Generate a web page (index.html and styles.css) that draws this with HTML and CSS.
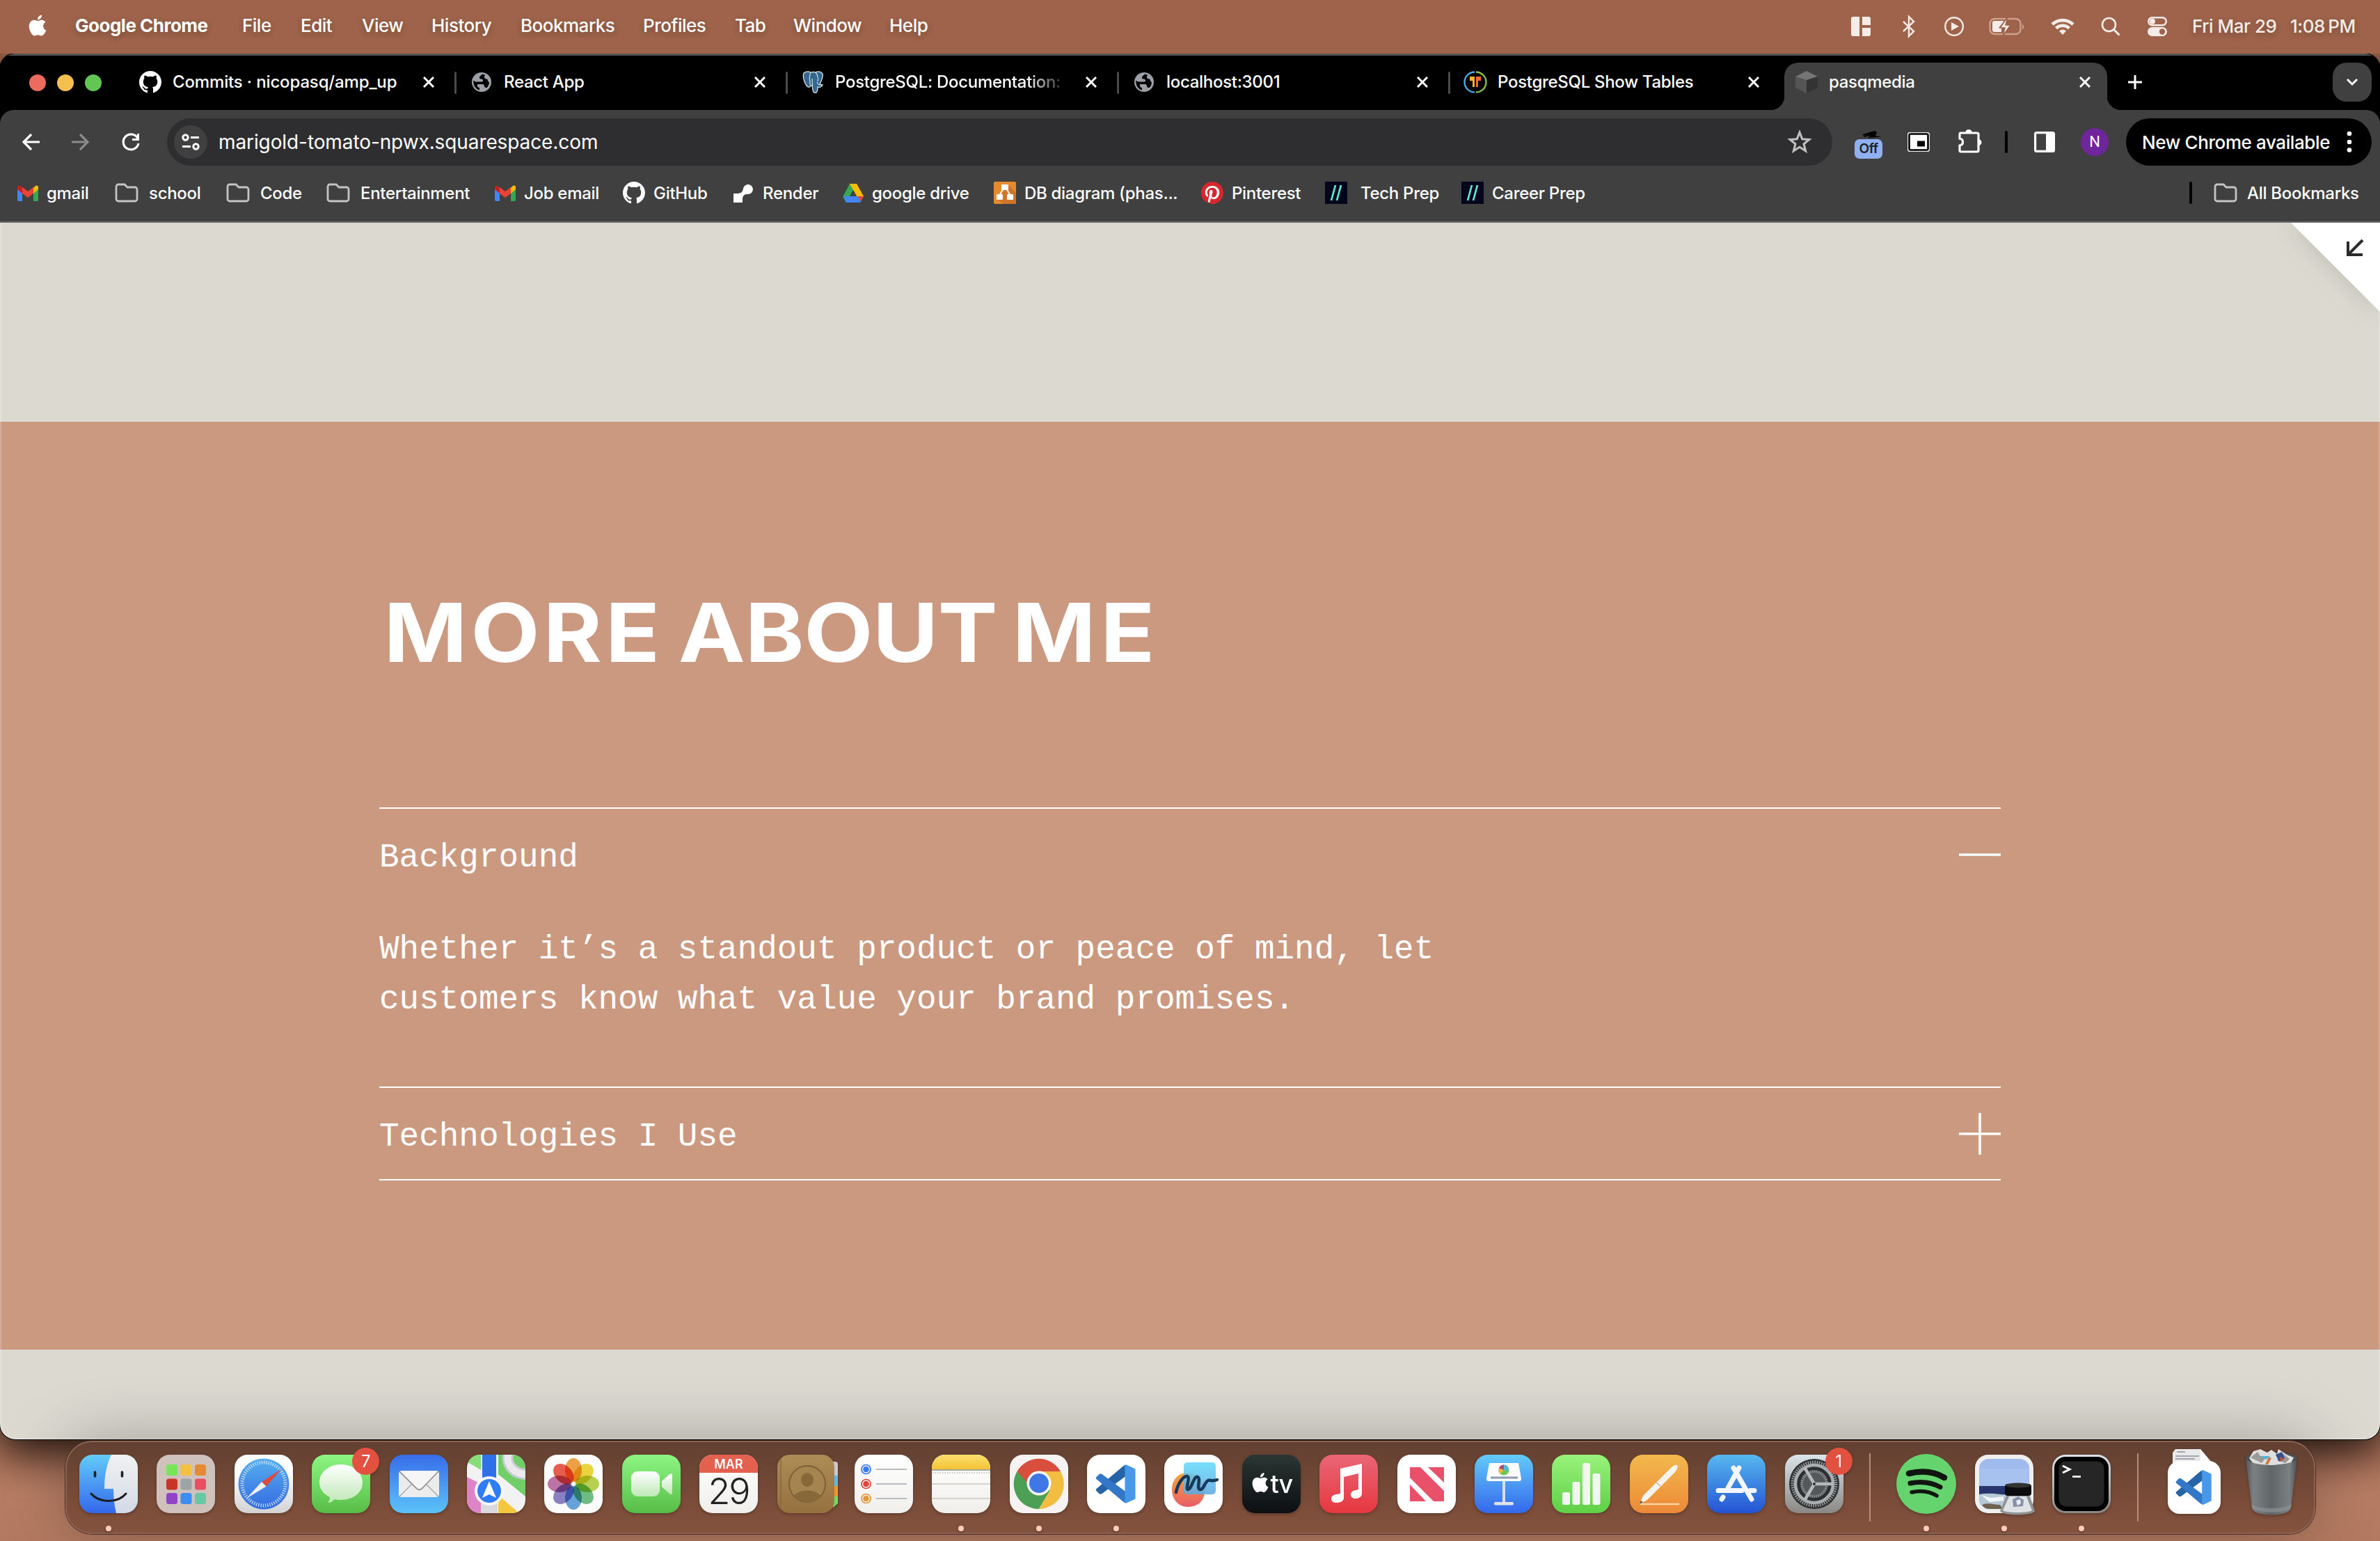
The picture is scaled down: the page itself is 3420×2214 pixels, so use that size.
FILE: index.html
```
<!DOCTYPE html>
<html lang="en">
<head>
<meta charset="utf-8">
<title>pasqmedia</title>
<link rel="stylesheet" href="styles.css">
</head>
<body>
<svg class="defs" aria-hidden="true">
  <defs>
    <symbol id="apple" viewBox="0 0 24 24"><path fill="currentColor" d="M12.152 6.896c-.948 0-2.415-1.078-3.96-1.04-2.04.027-3.91 1.183-4.961 3.014-2.117 3.675-.546 9.103 1.519 12.09 1.013 1.454 2.208 3.09 3.792 3.039 1.52-.065 2.09-.987 3.935-.987 1.831 0 2.35.987 3.96.948 1.637-.026 2.676-1.48 3.676-2.948 1.156-1.688 1.636-3.325 1.662-3.415-.039-.013-3.182-1.221-3.22-4.857-.026-3.04 2.48-4.494 2.597-4.559-1.429-2.09-3.623-2.324-4.39-2.376-2-.156-3.675 1.09-4.61 1.09zM15.53 3.83c.843-1.012 1.4-2.427 1.245-3.83-1.207.052-2.662.805-3.532 1.818-.78.896-1.454 2.338-1.273 3.714 1.338.104 2.715-.688 3.559-1.701"/></symbol>
    <symbol id="github" viewBox="0 0 16 16"><path fill="#fff" d="M8 0C3.58 0 0 3.58 0 8c0 3.54 2.29 6.53 5.47 7.59.4.07.55-.17.55-.38 0-.19-.01-.82-.01-1.49-2.01.37-2.53-.49-2.69-.94-.09-.23-.48-.94-.82-1.13-.28-.15-.68-.52-.01-.53.63-.01 1.08.58 1.23.82.72 1.21 1.87.87 2.33.66.07-.52.28-.87.51-1.07-1.78-.2-3.64-.89-3.64-3.95 0-.87.31-1.59.82-2.15-.08-.2-.36-1.02.08-2.12 0 0 .67-.21 2.2.82.64-.18 1.32-.27 2-.27s1.36.09 2 .27c1.53-1.04 2.2-.82 2.2-.82.44 1.1.16 1.92.08 2.12.51.56.82 1.27.82 2.15 0 3.07-1.87 3.75-3.65 3.95.29.25.54.73.54 1.48 0 1.07-.01 1.93-.01 2.2 0 .21.15.46.55.38A8.01 8.01 0 0 0 16 8c0-4.42-3.58-8-8-8z"/></symbol>
    <symbol id="globe" viewBox="0 0 32 32"><circle cx="16" cy="16" r="14" fill="#9aa0a6"/><path fill="#000" d="M17 4.500c-1 2-4 2.500-4 5 0 2 1.500 2 3 2s2 1 2 2.500-1 1.500-2.500 1.500H8.500c-2 0-3.500-1-4-2.500C3.500 20 7 26 13 27.500V24c-2 0-3-1-3-3v-2h7.500c2 0 2.500 1.500 2.500 3s1.500 2 3.500 2c2-2 3.500-4.500 3.500-8-1 0-2-1-2-2.500S23 11 21.500 11 20 9 20 8l1-2.500z"/></symbol>
    <symbol id="close" viewBox="0 0 16 16"><path d="M1 1l14 14M15 1L1 15" stroke="#fff" stroke-width="3" fill="none"/></symbol>
    <symbol id="folder" viewBox="0 0 34 28"><path d="M2 5a3 3 0 0 1 3-3h9l4 4h11a3 3 0 0 1 3 3v14a3 3 0 0 1-3 3H5a3 3 0 0 1-3-3z" fill="none" stroke="#c4c4c4" stroke-width="2.800"/></symbol>
    <symbol id="gmail" viewBox="0 0 30 23"><path fill="#4285f4" d="M0 3h7v20H2a2 2 0 0 1-2-2z"/><path fill="#34a853" d="M23 3h7v18a2 2 0 0 1-2 2h-5z"/><path fill="#fbbc04" d="M23 4l3-3c2-1.500 4 0 4 2v3l-7 6z"/><path fill="#c5221f" d="M0 3c0-2 2-3.500 4-2l3 3v8L0 6z"/><path fill="#ea4335" d="M7 3l8 6 8-6v9l-8 6-8-6z"/></symbol>
    <symbol id="vscode" viewBox="0 0 60 60"><path fill="#2664a8" d="M44 3v16L10 44c-2 1-3 1-4 0l-4-4c-1-1-1-2 0-3L41 4z"/><path fill="#3277c8" d="M44 57V41L10 16c-2-1-3-1-4 0l-4 4c-1 1-1 2 0 3l39 33z"/><path fill="#4798e8" d="M44 2l13 6c1 1 1 1.500 1 2v40c0 1 0 1.500-1 2l-13 6c-1-1-1-1-1-2V4c0-1 0-1 1-2z"/></symbol>
    <linearGradient id="gFinder" x1="0" y1="0" x2="0" y2="1"><stop offset="0" stop-color="#63cbf9"/><stop offset="1" stop-color="#3468ec"/></linearGradient>
    <linearGradient id="gFace" x1="0" y1="0" x2="0" y2="1"><stop offset="0" stop-color="#f1f1f2"/><stop offset="1" stop-color="#d3dae6"/></linearGradient>
    <linearGradient id="gWhite" x1="0" y1="0" x2="0" y2="1"><stop offset=".3" stop-color="#fff"/><stop offset="1" stop-color="#d3d3d3"/></linearGradient>
    <linearGradient id="gPaper" x1="0" y1="0" x2="0" y2="1"><stop offset="0" stop-color="#fff"/><stop offset="1" stop-color="#f0efec"/></linearGradient>
    <linearGradient id="gGreen" x1="0" y1="0" x2="0" y2="1"><stop offset="0" stop-color="#8df682"/><stop offset="1" stop-color="#57bd47"/></linearGradient>
    <linearGradient id="gBlue" x1="0" y1="0" x2="0" y2="1"><stop offset="0" stop-color="#386cea"/><stop offset="1" stop-color="#5bc3f9"/></linearGradient>
    <linearGradient id="gBubble" x1="0" y1="0" x2="0" y2="1"><stop offset="0" stop-color="#fff"/><stop offset="1" stop-color="#bfe8b5"/></linearGradient>
    <linearGradient id="gSafari" x1="0" y1="0" x2="0" y2="1"><stop offset="0" stop-color="#55aef0"/><stop offset="1" stop-color="#356ce0"/></linearGradient>
    <linearGradient id="gRed" x1="0" y1="0" x2="0" y2="1"><stop offset="0" stop-color="#ea6677"/><stop offset="1" stop-color="#e6373f"/></linearGradient>
    <linearGradient id="gOrange" x1="0" y1="0" x2="0" y2="1"><stop offset="0" stop-color="#f3b94d"/><stop offset="1" stop-color="#ec8937"/></linearGradient>
    <linearGradient id="gStore" x1="0" y1="0" x2="0" y2="1"><stop offset="0" stop-color="#56b8ef"/><stop offset="1" stop-color="#2453d4"/></linearGradient>
    <linearGradient id="gNumbers" x1="0" y1="0" x2="0" y2="1"><stop offset="0" stop-color="#99f37b"/><stop offset="1" stop-color="#5ed046"/></linearGradient>
    <linearGradient id="gDark" x1="0" y1="0" x2="0" y2="1"><stop offset="0" stop-color="#2b3633"/><stop offset="1" stop-color="#0c0f12"/></linearGradient>
    <linearGradient id="gGold" x1="0" y1="0" x2="0" y2="1"><stop offset="0" stop-color="#ad8c55"/><stop offset="1" stop-color="#957140"/></linearGradient>
    <linearGradient id="gGear" x1="0" y1="0" x2="0" y2="1"><stop offset="0" stop-color="#dbe4ea"/><stop offset="1" stop-color="#8b8884"/></linearGradient>
    <linearGradient id="gYellow" x1="0" y1="0" x2="0" y2="1"><stop offset="0" stop-color="#fbdf6f"/><stop offset="1" stop-color="#f4c236"/></linearGradient>
    <linearGradient id="gBin" x1="0" y1="0" x2="1" y2="0"><stop offset="0" stop-color="#52575a"/><stop offset=".15" stop-color="#7b8083"/><stop offset=".5" stop-color="#606568"/><stop offset=".85" stop-color="#7b8083"/><stop offset="1" stop-color="#4a4e51"/></linearGradient>
    <linearGradient id="gSquare" x1="0" y1="0" x2="0" y2="1"><stop offset="0" stop-color="#66dbfb"/><stop offset="1" stop-color="#5fa9df"/></linearGradient>
    <linearGradient id="gBlob" x1="0" y1="0" x2="0" y2="1"><stop offset="0" stop-color="#f2a63c"/><stop offset="1" stop-color="#ea5c68"/></linearGradient>
    <clipPath id="tile"><rect width="84" height="84" rx="19"/></clipPath>
  </defs>
</svg>

<div class="desktop">
  <header class="menubar">
    <nav class="menus">
      <svg class="apple-mark"><use href="#apple"/></svg>
      <b>Google Chrome</b><span>File</span><span>Edit</span><span>View</span><span>History</span><span>Bookmarks</span><span>Profiles</span><span>Tab</span><span>Window</span><span>Help</span>
    </nav>
    <div class="status">
      <svg width="28" height="28" viewBox="0 0 28 28"><path fill="currentColor" d="M3 0h9v28H3a3 3 0 0 1-3-3V3a3 3 0 0 1 3-3zM16 0h9a3 3 0 0 1 3 3v9H16zM16 16h12v9a3 3 0 0 1-3 3h-9z"/></svg>
      <svg width="18" height="30" viewBox="0 0 18 30"><path d="M1 8l15 14-7 7V1l7 7L1 22" fill="none" stroke="currentColor" stroke-width="2.400"/></svg>
      <svg width="30" height="30" viewBox="0 0 30 30"><circle cx="15" cy="15" r="12.800" fill="none" stroke="currentColor" stroke-width="2.400"/><path d="M11 9l11 6-11 6z" fill="currentColor"/></svg>
      <svg width="52" height="28" viewBox="0 0 52 28"><rect x="1.500" y="3" width="44" height="22" rx="7" fill="none" stroke="#cda08d" stroke-width="2.400"/><path d="M48 11v7c3-1 3-6 0-7z" fill="#cda08d"/><path d="M8 6h14l-8 10h4v6H8a3 3 0 0 1-3-3V9a3 3 0 0 1 3-3z" fill="currentColor"/><path d="M27 0L16 16h7l-3 12 11-16h-7z" fill="currentColor" stroke="#9e634a" stroke-width="1.500"/></svg>
      <svg width="34" height="26" viewBox="0 0 34 26"><path d="M2 10a22 22 0 0 1 30 0M7.500 15.500a14 14 0 0 1 19 0" fill="none" stroke="currentColor" stroke-width="4.600"/><path d="M17 25l-5-5.500a8 8 0 0 1 10 0z" fill="currentColor"/></svg>
      <svg width="28" height="28" viewBox="0 0 28 28"><circle cx="11.500" cy="11.500" r="9.500" fill="none" stroke="currentColor" stroke-width="2.600"/><path d="M18.500 18.500l8 8" stroke="currentColor" stroke-width="3"/></svg>
      <svg width="28" height="28" viewBox="0 0 28 28"><rect x="1.200" y="1.200" width="25.600" height="11" rx="5.500" fill="none" stroke="currentColor" stroke-width="2.400"/><circle cx="7" cy="6.700" r="4" fill="currentColor"/><rect y="15" width="28" height="13" rx="6.500" fill="currentColor"/><circle cx="21" cy="21.500" r="4.200" fill="#9e634a"/></svg>
      <span>Fri Mar 29</span><span class="time">1:08 PM</span>
    </div>
  </header>

  <main class="window">
    <div class="tabstrip">
      <div class="lights"><i class="red"></i><i class="amber"></i><i class="green"></i></div>
      <div class="tab first"><svg class="fav"><use href="#github"/></svg><span>Commits · nicopasq/amp_up</span><svg class="x"><use href="#close"/></svg></div>
      <div class="tab"><svg class="fav"><use href="#globe"/></svg><span>React App</span><svg class="x"><use href="#close"/></svg></div>
      <div class="tab"><svg class="fav" viewBox="0 0 32 32"><path fill="#336791" stroke="#dfe6ea" stroke-width="1.300" d="M3 3c4-3 8-2 10-1 3-1 5-1 7 0 4-2 8-1 10 2 1 5-2 11-4 15 1 1 3 1 4 1-1 3-4 4-7 3 0 3 0 6-2 8-3 1-5-1-5-4l-1-7c-2 3-5 4-7 2C4 18 1 8 3 3z"/><path d="M13 2c-2 4-2 9-1 14 0 2-1 3 1 5M20 2c3 4 4 9 3 13M16 20c-2-3 0-5-1-9M22 16c1 2 3 4 4 4" fill="none" stroke="#b9d6cf" stroke-width="1.300"/></svg><span class="fade">PostgreSQL: Documentation:</span><svg class="x"><use href="#close"/></svg></div>
      <div class="tab"><svg class="fav"><use href="#globe"/></svg><span>localhost:3001</span><svg class="x"><use href="#close"/></svg></div>
      <div class="tab last"><svg class="fav" viewBox="0 0 32 32"><path d="M15 1.500a14.500 14.500 0 0 0 0 29" fill="none" stroke="#4aa8e8" stroke-width="2.400"/><path d="M17 1.500a14.500 14.500 0 0 1 0 29" fill="none" stroke="#8bc34a" stroke-width="2.400"/><path fill="#f5b32e" d="M8 8h7v15h-3v-9H8z"/><path fill="#ef6c2e" d="M17 8h7v6h-4v9h-3z"/></svg><span>PostgreSQL Show Tables</span><svg class="x"><use href="#close"/></svg></div>
      <div class="tab active"><svg class="fav" viewBox="0 0 32 32"><path fill="#757575" d="M16 0l16 8-16 6L0 8z"/><path fill="#555" d="M0 8l16 5v19L0 24z"/><path fill="#333" d="M32 8l-16 5v19l16-8z"/></svg><span>pasqmedia</span><svg class="x"><use href="#close"/></svg></div>
      <svg class="newtab" viewBox="0 0 22 22"><path d="M11 1v20M1 11h20" stroke="#fff" stroke-width="3"/></svg>
      <div class="tabsearch"><svg width="18" height="12" viewBox="0 0 18 12"><path d="M2 2l7 7 7-7" fill="none" stroke="#fff" stroke-width="3"/></svg></div>
    </div>

    <div class="toolbar">
      <svg class="nav" viewBox="0 0 32 32"><path d="M29 16H7M17 5L6 16l11 11" fill="none" stroke="#fff" stroke-width="3.200"/></svg>
      <svg class="nav" viewBox="0 0 32 32"><path d="M3 16h22M15 5l11 11-11 11" fill="none" stroke="#8b8b8b" stroke-width="3.200"/></svg>
      <svg class="nav" viewBox="0 0 32 32"><path d="M26.500 12A11 11 0 1 0 27 18" fill="none" stroke="#fff" stroke-width="3.200"/><path d="M28 4v10H18v-3h7V4z" fill="#fff"/></svg>
      <div class="omnibox">
        <div class="site"><svg width="26" height="24" viewBox="0 0 26 24"><g fill="none" stroke="#fff" stroke-width="3"><circle cx="5.500" cy="5.500" r="3.700"/><path d="M13 5.500h12M1 18.500h12"/><circle cx="20.500" cy="18.500" r="3.700"/></g></svg></div>
        <span class="url">marigold-tomato-npwx.squarespace.com</span>
        <svg class="star" viewBox="0 0 32 32"><path d="M16 3l3.600 9 9.400.7-7.300 6 2.400 9.300-8.100-5.200L7.900 28l2.400-9.300-7.300-6 9.400-.7z" fill="none" stroke="#c0c0c0" stroke-width="2.900"/></svg>
      </div>
      <div class="ext"><svg width="28" height="10" viewBox="0 0 28 10"><path d="M2 5l13-4 5-1 2 3-2 3 3 3-14 1 4-3-10 2 1-2 9-3-11 3zM22 8h5v1h-5z" fill="#000"/></svg><span>Off</span></div>
      <svg class="pip" viewBox="0 0 32 28"><rect width="32" height="28" rx="3" fill="#ececec"/><rect x="2.500" y="2.500" width="27" height="23" rx="2" fill="#fff" stroke="#000" stroke-width="2.600"/><rect x="14" y="12.500" width="11" height="8" fill="#000"/></svg>
      <svg class="puzzle" viewBox="0 0 34 34"><path d="M3 5h24a2 2 0 0 1 2 2v23a2 2 0 0 1-2 2H4a2 2 0 0 1-2-2v-7c6-1 6-9 0-10V7a2 2 0 0 1 1-2z" fill="none" stroke="#fff" stroke-width="3.200"/><path d="M10 5a5 5 0 0 1 10 0zM29 14a4.500 4.500 0 0 1 0 9z" fill="#fff"/></svg>
      <i class="bar"></i>
      <svg class="side" viewBox="0 0 30 30"><rect x="1.600" y="1.600" width="26.800" height="26.800" rx="2" fill="none" stroke="#fff" stroke-width="3.200"/><path d="M17 1h12v28H17z" fill="#fff"/></svg>
      <div class="avatar">N</div>
      <div class="update"><span>New Chrome available</span><svg width="8" height="32" viewBox="0 0 8 32"><g fill="#fff"><circle cx="4" cy="4" r="3.300"/><circle cx="4" cy="16" r="3.300"/><circle cx="4" cy="27.500" r="3.300"/></g></svg></div>
    </div>

    <div class="bookmarks">
      <div class="bm gm"><i><svg width="30" height="23"><use href="#gmail"/></svg></i>gmail</div>
      <div class="bm folder"><i><svg width="34" height="28"><use href="#folder"/></svg></i>school</div>
      <div class="bm folder"><i><svg width="34" height="28"><use href="#folder"/></svg></i>Code</div>
      <div class="bm folder"><i><svg width="34" height="28"><use href="#folder"/></svg></i>Entertainment</div>
      <div class="bm gm"><i><svg width="30" height="23"><use href="#gmail"/></svg></i>Job email</div>
      <div class="bm"><i><svg width="32" height="32"><use href="#github"/></svg></i>GitHub</div>
      <div class="bm gm"><i><svg width="28" height="28" viewBox="0 0 28 28"><path fill="#fff" d="M0 15h13v13H0zM5 15c6 0 8-2 9-7a7 7 0 1 1 7 8c-5 0-7 1-8 6z"/></svg></i>Render</div>
      <div class="bm gm"><i><svg width="30" height="27" viewBox="0 0 30 27"><path fill="#34a853" d="M10 0h6l3 5L5 27 0 19z"/><path fill="#fbbc04" d="M10 0h10l10 18H20z"/><path fill="#4285f4" d="M1 18h29l-5 9H5z"/><path fill="#ea4335" d="M21 18h9l-4 7z"/><path fill="#404040" d="M15 9l5 9H10z"/></svg></i>google drive</div>
      <div class="bm"><i><svg width="32" height="32" viewBox="0 0 32 32"><rect width="32" height="32" rx="2" fill="#e58a2f"/><path fill="#cf7428" d="M20 4l12 12v16H14L6 26z"/><path d="M15 8L8 20M17 8l7 12" stroke="#fff" stroke-width="2"/><rect x="11" y="4" width="10" height="8" rx="1" fill="#fff"/><rect x="4" y="18" width="9" height="8" rx="1" fill="#fff"/><rect x="19" y="18" width="9" height="8" rx="1" fill="#fff"/></svg></i>DB diagram (phas...</div>
      <div class="bm"><i><svg width="32" height="32" viewBox="0 0 24 24"><circle cx="12" cy="12" r="11" fill="#fff"/><path fill="#d8262f" d="M12.017 0C5.396 0 .029 5.367.029 11.987c0 5.079 3.158 9.417 7.618 11.162-.105-.949-.199-2.403.041-3.439.219-.937 1.406-5.957 1.406-5.957s-.359-.72-.359-1.781c0-1.663.967-2.911 2.168-2.911 1.024 0 1.518.769 1.518 1.688 0 1.029-.653 2.567-.992 3.992-.285 1.193.6 2.165 1.775 2.165 2.128 0 3.768-2.245 3.768-5.487 0-2.861-2.063-4.869-5.008-4.869-3.41 0-5.409 2.562-5.409 5.199 0 1.033.394 2.143.889 2.741.099.12.112.225.085.345-.09.375-.293 1.199-.334 1.363-.053.225-.172.271-.401.165-1.495-.69-2.433-2.878-2.433-4.646 0-3.776 2.748-7.252 7.92-7.252 4.158 0 7.392 2.967 7.392 6.923 0 4.135-2.607 7.462-6.233 7.462-1.214 0-2.354-.629-2.758-1.379l-.749 2.848c-.269 1.045-1.004 2.352-1.498 3.146 1.123.345 2.306.535 3.55.535 6.607 0 11.985-5.365 11.985-11.987C23.97 5.39 18.592.026 11.985.026z"/></svg></i>Pinterest</div>
      <div class="bm wide"><i><svg width="32" height="32" viewBox="0 0 32 32"><rect width="32" height="32" fill="#03061a"/><path d="M9 27l6-22M17 27l6-22" stroke="#5fe3d0" stroke-width="2.800"/></svg></i>Tech Prep</div>
      <div class="bm"><i><svg width="32" height="32" viewBox="0 0 32 32"><rect width="32" height="32" fill="#03061a"/><path d="M9 27l6-22M17 27l6-22" stroke="#5fe3d0" stroke-width="2.800"/></svg></i>Career Prep</div>
      <div class="bm all folder"><b></b><i><svg width="34" height="28"><use href="#folder"/></svg></i>All Bookmarks</div>
    </div>

    <div class="page">
      <section class="top">
        <div class="corner"><svg viewBox="0 0 128 128"><path d="M0 0h128v128z" fill="#fff"/><path d="M103 25L83 45M82 27v19h21" fill="none" stroke="#2b2b2b" stroke-width="4"/></svg></div>
      </section>
      <section class="about">
        <h1><span class="more">MORE</span> <span class="abt">ABOUT</span> <span class="me">ME</span></h1>
        <div class="accordion">
          <div class="row"><span>Background</span><svg width="60" height="60" viewBox="0 0 60 60"><path d="M0 30h60" stroke="#fff" stroke-width="3.600"/></svg></div>
          <p>Whether it’s a standout product or peace of mind, let customers know what value your brand promises.</p>
          <div class="row second"><span>Technologies I Use</span><svg width="60" height="60" viewBox="0 0 60 60"><path d="M0 30h60M30 0v60" stroke="#fff" stroke-width="3.600"/></svg></div>
        </div>
      </section>
    </div>
  </main>

  <footer class="dock">
    <div class="app on"><svg viewBox="0 0 84 84"><g clip-path="url(#tile)"><rect width="84" height="84" fill="url(#gFinder)"/><path d="M46 0h38v84H53c-3-12-4-24-4-35H36C36 28 40 12 46 0z" fill="url(#gFace)"/></g><path d="M22.500 25v6M61.500 25v6" stroke="#222" stroke-width="3.600" stroke-linecap="round"/><path d="M17 56c12 14 38 14 50 0" fill="none" stroke="#1b1b1f" stroke-width="3" stroke-linecap="round"/></svg></div>
    <div class="app"><svg viewBox="0 0 84 84"><rect width="84" height="84" rx="19" fill="#cfc2bd"/><rect x="14" y="14" width="16" height="16" rx="3.500" fill="#79e35a"/><rect x="34.500" y="14" width="16" height="16" rx="3.500" fill="#f3c043"/><rect x="55" y="14" width="16" height="16" rx="3.500" fill="#e58a33"/><rect x="14" y="34.500" width="16" height="16" rx="3.500" fill="#c93527"/><rect x="34.500" y="34.500" width="16" height="16" rx="3.500" fill="#9ca4a8"/><rect x="55" y="34.500" width="16" height="16" rx="3.500" fill="#e94e63"/><rect x="14" y="55" width="16" height="16" rx="3.500" fill="#9144c8"/><rect x="34.500" y="55" width="16" height="16" rx="3.500" fill="#3d8df0"/><rect x="55" y="55" width="16" height="16" rx="3.500" fill="#66c9a6"/></svg></div>
    <div class="app"><svg viewBox="0 0 84 84"><rect width="84" height="84" rx="19" fill="url(#gWhite)"/><circle cx="42" cy="42" r="36.500" fill="url(#gSafari)"/><circle cx="42" cy="42" r="31" fill="none" stroke="#cfe4fa" stroke-width="5" stroke-dasharray="1.200 2.047"/><path d="M67 21L45.500 45.500 39 39z" fill="#df4a3c"/><path d="M17 63l22-24 6.500 6.500z" fill="#eee"/></svg></div>
    <div class="app"><svg viewBox="0 0 84 84"><rect width="84" height="84" rx="19" fill="url(#gGreen)"/><path d="M42 14c17 0 31 11 31 26S59 65 42 65c-3 0-6 0-9-1-3 3-6 5-10 5 2-2 3-5 3-8-9-4-15-12-15-21 0-15 14-26 31-26z" fill="url(#gBubble)"/></svg><em>7</em></div>
    <div class="app"><svg viewBox="0 0 84 84"><rect width="84" height="84" rx="19" fill="url(#gBlue)"/><rect x="13" y="23" width="58" height="38" rx="4" fill="#ececec"/><path d="M14 60l20-20M70 60L50 40" stroke="#aaa" stroke-width="1.500"/><path d="M14 24l24 24c3 3 6 3 9 0l23-24" fill="#f6f6f6" stroke="#9a9a9a" stroke-width="1.800"/></svg></div>
    <div class="app"><svg viewBox="0 0 84 84"><g clip-path="url(#tile)"><rect width="84" height="84" fill="#f2f1f4"/><path d="M0 0h20v22L0 10z" fill="#86de78"/><path d="M45 0h39v60L45 28z" fill="#70cf66"/><path d="M0 32l20 10v42H0z" fill="#dd83c8"/><path d="M45 58l30 26H45z" fill="#f3c83f"/><path d="M60-4c-6 18 8 34 30 32" stroke="#c9c9d2" stroke-width="16" fill="none"/><path d="M60-4c-6 18 8 34 30 32" stroke="#e9e9ee" stroke-width="10" fill="none"/><rect x="22" width="20" height="34" fill="#2f6fe8"/><path d="M20 70h24v14H20z" fill="#d9d9de"/></g><circle cx="32" cy="52" r="21" fill="#f6f6f8"/><circle cx="32" cy="52" r="17" fill="#2f7df5"/><path d="M32 38l10 24-10-5-10 5z" fill="#fff"/></svg></div>
    <div class="app"><svg viewBox="0 0 84 84"><rect width="84" height="84" rx="19" fill="#fcfcfc"/><g class="petals"><ellipse cx="42" cy="22" rx="12" ry="17" fill="#f09a37"/><ellipse cx="42" cy="22" rx="12" ry="17" fill="#ecd32f" transform="rotate(45 42 42)"/><ellipse cx="42" cy="22" rx="12" ry="17" fill="#b3cf43" transform="rotate(90 42 42)"/><ellipse cx="42" cy="22" rx="12" ry="17" fill="#64b97a" transform="rotate(135 42 42)"/><ellipse cx="42" cy="22" rx="12" ry="17" fill="#5a9cd8" transform="rotate(180 42 42)"/><ellipse cx="42" cy="22" rx="12" ry="17" fill="#8277c0" transform="rotate(225 42 42)"/><ellipse cx="42" cy="22" rx="12" ry="17" fill="#b8699f" transform="rotate(270 42 42)"/><ellipse cx="42" cy="22" rx="12" ry="17" fill="#e9503f" transform="rotate(315 42 42)"/></g></svg></div>
    <div class="app"><svg viewBox="0 0 84 84"><rect width="84" height="84" rx="19" fill="url(#gGreen)"/><rect x="13" y="24" width="41" height="36" rx="9" fill="url(#gBubble)"/><path d="M57 38l11-10c2-1.500 4-1 4 1v26c0 2-2 2.500-4 1L57 46z" fill="url(#gBubble)"/></svg></div>
    <div class="app"><svg viewBox="0 0 84 84"><g clip-path="url(#tile)"><rect width="84" height="84" fill="url(#gPaper)"/><rect width="84" height="26" fill="#e5614f"/></g><text x="42" y="20" class="cal-month">MAR</text><text x="42" y="71" class="cal-day">29</text></svg></div>
    <div class="app"><svg viewBox="0 0 84 84"><rect x="70" y="10" width="17" height="22" rx="4" fill="#c9c9c9"/><path d="M80 30h7v15h-7z" fill="#5db5e8"/><path d="M80 45h7v15h-7z" fill="#ef9431"/><path d="M80 60h7v10l-7 6z" fill="#6fdc60"/><rect width="82" height="84" rx="18" fill="url(#gGold)"/><path d="M5 6v72" stroke="#87683a" stroke-width="1.500"/><circle cx="43" cy="42" r="26" fill="#a58450" stroke="#7d6036" stroke-width="2"/><ellipse cx="43" cy="36" rx="9" ry="10" fill="#866839"/><path d="M24 59c7-10 31-10 38 0-9 12-29 12-38 0z" fill="#866839"/></svg></div>
    <div class="app"><svg viewBox="0 0 84 84"><rect width="84" height="84" rx="19" fill="url(#gPaper)"/><g fill="none" stroke-width="1.700"><circle cx="16.500" cy="21" r="6.500" stroke="#3478f6"/><circle cx="16.500" cy="42" r="6.500" stroke="#dc4437"/><circle cx="16.500" cy="63" r="6.500" stroke="#e7963a"/></g><circle cx="16.500" cy="21" r="4.300" fill="#3478f6"/><circle cx="16.500" cy="42" r="4.300" fill="#dc4437"/><circle cx="16.500" cy="63" r="4.300" fill="#e7963a"/><path d="M31 21h44M31 42h44M31 63h44" stroke="#b9bbbe" stroke-width="2"/></svg></div>
    <div class="app on"><svg viewBox="0 0 84 84"><g clip-path="url(#tile)"><rect width="84" height="84" fill="url(#gPaper)"/><rect width="84" height="21" fill="url(#gYellow)"/><path d="M0 22h84" stroke="#a9a69c" stroke-width="2"/><path d="M1 26h84" stroke="#b5b2a9" stroke-width="1.500" stroke-dasharray="1.500 2"/><path d="M0 42h84M0 63h84" stroke="#d5d3ce" stroke-width="2"/></g></svg></div>
    <div class="app on"><svg viewBox="0 0 84 84"><rect width="84" height="84" rx="19" fill="#f7f3f2"/><path d="M42 42h-9L10.500 24A36 36 0 0 0 42 78l16-27z" fill="#4d9f55"/><path d="M42 24h31A36 36 0 0 1 42 78l16-27z" fill="#f2be42"/><path d="M10.500 24A36 36 0 0 1 73 24H42c-9 0-16 6-17 16z" fill="#d94f3d"/><circle cx="42" cy="41" r="17.500" fill="#fff"/><circle cx="42" cy="41" r="14" fill="#3f78e6"/></svg></div>
    <div class="app on"><svg viewBox="0 0 84 84"><rect width="84" height="84" rx="19" fill="#fff"/><use href="#vscode" x="11" y="12" width="61" height="60"/></svg></div>
    <div class="app"><svg viewBox="0 0 84 84"><rect width="84" height="84" rx="19" fill="#fff"/><path d="M11 50c0-14 9-24 22-24 14 0 25 12 25 27 0 13-10 22-24 22S11 64 11 50z" fill="url(#gBlob)"/><rect x="28" y="11" width="46" height="46" rx="5" fill="url(#gSquare)" opacity=".88"/><path d="M17 54c2-11 10-24 16-23 5 1-3 18 1 19 5 1 8-20 14-18 5 2-2 16 3 18 6 1 7-11 12-13 4-1 6 2 13-1" fill="none" stroke="#153a5c" stroke-width="4.500" stroke-linecap="round"/></svg></div>
    <div class="app"><svg viewBox="0 0 84 84"><rect width="84" height="84" rx="19" fill="url(#gDark)"/></svg><div class="tv"><svg><use href="#apple"/></svg><span>tv</span></div></div>
    <div class="app"><svg viewBox="0 0 84 84"><rect width="84" height="84" rx="19" fill="url(#gRed)"/><path d="M30 20l31-7v43c0 4-4 7-9 7-4 0-7-2-7-5.500s3-6 7-6.500l4-1V27l-21 5v30c0 4-4 7-10 7-5 0-8-2-8-5.500s3-6 7-6.500l6-1z" fill="#fff"/></svg></div>
    <div class="app"><svg viewBox="0 0 84 84"><rect width="84" height="84" rx="19" fill="#fff"/><path d="M18 18h15l34 34v15H52L18 33z" fill="#e9506a"/><path d="M44 18h23v22zM18 43v24h23z" fill="#e9506a"/></svg></div>
    <div class="app"><svg viewBox="0 0 84 84"><rect width="84" height="84" rx="19" fill="url(#gFinder)"/><path d="M42 36v34" stroke="#d9dde4" stroke-width="4"/><rect x="28" y="68" width="28" height="4.500" rx="2" fill="#dfe2e8"/><path d="M21 12h42l4 22c0 3-1 4-3 4H20c-2 0-3-1-3-4z" fill="#fbfbfc"/><path d="M23 33h39" stroke="#8c9bb0" stroke-width="3"/><circle cx="42" cy="22" r="7.500" fill="#70c552"/><path d="M42 22v-7.500a7.500 7.500 0 0 1 7 9z" fill="#51b9ea"/><path d="M42 22l-5 5.500a7.500 7.500 0 0 1-2-8z" fill="#f2b43b"/><path d="M42 22l-7-3a7.500 7.500 0 0 1 7-4.500z" fill="#b54a78"/></svg></div>
    <div class="app"><svg viewBox="0 0 84 84"><rect width="84" height="84" rx="19" fill="url(#gNumbers)"/><g fill="#f2f6f1"><rect x="15" y="54" width="11" height="18" rx="2.500"/><rect x="29.500" y="39" width="11" height="33" rx="2.500"/><rect x="44" y="12" width="11" height="60" rx="2.500"/><rect x="58.500" y="27" width="11" height="45" rx="2.500"/></g></svg></div>
    <div class="app"><svg viewBox="0 0 84 84"><rect width="84" height="84" rx="19" fill="url(#gOrange)"/><path d="M15 71h56" stroke="#f9d3a4" stroke-width="2.500"/><path d="M14 71l5-12 40-40c4-4 7-5 9-4s0 6-3 10L25 65z" fill="#f6f4f1"/><path d="M38 40l6 5" stroke="#b9b3a9" stroke-width="1.500"/><path d="M14 71l2-5 3 2z" fill="#555"/></svg></div>
    <div class="app"><svg viewBox="0 0 84 84"><rect width="84" height="84" rx="19" fill="url(#gStore)"/><g stroke="#f3f7fc" stroke-width="7" stroke-linecap="round"><path d="M46 19L30 48M38 19l26 45M16 51.500h34M62 51.500h6M23 61l-2 3"/></g></svg></div>
    <div class="app"><svg viewBox="0 0 84 84"><rect width="84" height="84" rx="19" fill="url(#gGear)"/><circle cx="42" cy="42" r="36" fill="#2d2f30"/><circle cx="42" cy="42" r="31" fill="none" stroke="#9b9fa1" stroke-width="5" stroke-dasharray="1.600 1.650"/><circle cx="42" cy="42" r="27" fill="none" stroke="#a9adb0" stroke-width="4.500"/><circle cx="42" cy="42" r="19" fill="#55585a"/><circle cx="42" cy="42" r="18" fill="none" stroke="#85898b" stroke-width="4" stroke-dasharray="2 1"/><path d="M42 42h27M42 42L28.500 19M42 42L28.500 65" stroke="#b4b8ba" stroke-width="4.500"/><circle cx="42" cy="42" r="2" fill="#333"/></svg><em>1</em></div>
    <i class="rule"></i>
    <div class="app on"><svg viewBox="0 0 84 84"><circle cx="42" cy="42" r="43" fill="#65d36e"/><g fill="none" stroke="#101510" stroke-linecap="round"><path d="M17 27c17-4 36-3 51 6" stroke-width="8.500"/><path d="M19 41c15-3 29-2 43 5.500" stroke-width="7"/><path d="M21 54c13-3 25-2 36 5" stroke-width="5.500"/></g></svg></div>
    <div class="app on"><svg viewBox="0 0 84 84"><rect width="84" height="84" rx="19" fill="#efefef"/><rect x="6" y="6" width="72" height="72" rx="14" fill="#9fbbee"/><path d="M6 20h72v25H6z" fill="#aec6ef" opacity=".6"/><path d="M6 45h72v14H6z" fill="#27366f"/><path d="M6 57c20-4 40 4 72 0v7a14 14 0 0 1-14 14H20A14 14 0 0 1 6 64z" fill="#b5c9d6"/><path d="M10 72c8-4 18 0 26 0l4 6H20c-4 0-8-3-10-6z" fill="#6f6350"/><path d="M9 58l14 4 18-2v6l-20 2z" fill="#f3f6f8"/><path d="M46 57h32l8 24c-2 7-48 7-50 0z" fill="#8f9396"/><path d="M49 60h25l8 20c-4 4-38 4-42 0z" fill="#dfe2e4"/><path d="M54 64l8-4 8 5-1 9-14 1z" fill="#8790a6"/><path d="M59 66l6-2 1 6-5 3z" fill="#e8edf3"/><rect x="43" y="42" width="38" height="17" rx="4" fill="#0c0c0e"/><ellipse cx="62" cy="44" rx="18" ry="3.500" fill="#333"/></svg></div>
    <div class="app on"><svg viewBox="0 0 84 84"><rect width="84" height="84" rx="19" fill="url(#gGear)"/><rect x="3" y="3" width="78" height="78" rx="16" fill="#000"/><rect x="9.500" y="9.500" width="65" height="65" rx="10" fill="#262626"/><path d="M15 16l10 5-10 5" fill="none" stroke="#fff" stroke-width="3"/><path d="M29 31.500h12" stroke="#fff" stroke-width="2.600"/></svg></div>
    <i class="rule"></i>
    <div class="app"><svg viewBox="0 0 84 84"><path d="M11-3l4-5h36l18 22H11z" fill="#e9e9e9"/><path d="M51-8l17 20H51z" fill="#fafafa"/><path d="M15 2h34M15 6h28M17-4h12" stroke="#8b8f98" stroke-width="1.500"/><rect x="4" y="9" width="76" height="76" rx="17" fill="#fff"/><use href="#vscode" x="14" y="20" width="55" height="54"/></svg></div>
    <div class="app"><svg viewBox="0 0 84 84"><ellipse cx="42" cy="5" rx="37" ry="9" fill="#4c5053"/><path d="M10 5l6-10 10-3 10 5 6-4 8 6 2-7 12 8 10 4-4 8-30 4-24-3z" fill="#dedede"/><path d="M12 4l10-8 4 6 8 2-6 8zM50 8l8-10 10 8-6 6z" fill="#9a9a98"/><path d="M26 2h14l-6 5z" fill="#4db8d6"/><path d="M48 0l9-4 4 9-8 5z" fill="#345092"/><path d="M54 3l7 3-6 4z" fill="#c9542f"/><path d="M38 3l4 2-5 9-4 0z" fill="#cc7a4b"/><path d="M5 6c12 12 62 12 74 0l-9 70c-1 14-55 14-56 0z" fill="url(#gBin)"/><path d="M14 76c8 9 48 9 56 0l1-5c-12 8-46 8-58 0z" fill="#8c9194" opacity=".7"/></svg></div>
  </footer>
</div>
</body>
</html>
```
FILE: styles.css
```
* { box-sizing: border-box; }
body { margin: 0; font-family: Inter, "Liberation Sans", sans-serif; color: #fff; }
svg { display: block; flex: none; overflow: visible; }
i, em { font-style: normal; }
.defs { position: absolute; width: 0; height: 0; }

.desktop { position: relative; width: 3420px; height: 2214px; overflow: hidden; background: linear-gradient(#9e634a 0, #9e634a 90%, #b77d64 97%, #b47a61 100%); }

/* System menu bar */
.menubar { position: relative; z-index: 2; height: 77px; display: flex; justify-content: space-between; background: #9e634a; font-size: 26px; font-weight: 500; letter-spacing: -.5px; line-height: 74px; text-shadow: 0 3px 8px rgba(0,0,0,.25); white-space: nowrap; }
.menus { display: grid; grid-template-columns: 67px 240px 84px 88px 100px 128px 176px 132px 84px 138px auto; padding-left: 41px; align-items: start; }
.menus b { font-weight: 700; }
.apple-mark { width: 30px; height: 31px; margin: 21px 0 0 -2px; }
.status { display: grid; grid-template-columns: 74px 59px 65px 89px 72px 67px 64px 141px 129px; color: #f5ece8; height: 75px; align-items: center; }
.time { word-spacing: -2px; }

/* Browser window */
.window { position: relative; height: 1991px; border-radius: 22px; overflow: clip; background: #000; box-shadow: 0 0 0 1px #000, 0 18px 60px 0 rgba(0,0,0,.85); display: flex; flex-direction: column; }
.tabstrip { height: 81px; flex: none; display: flex; padding: 10px 12px 0 42px; border-top: 3px solid #525252; }
.lights { display: flex; gap: 16px; width: 158px; padding-top: 17px; }
.lights i { width: 24px; height: 24px; border-radius: 50%; }
.red { background: #ed6a5e; }
.amber { background: #f5bf4f; }
.green { background: #62c554; }
.tab { position: relative; width: 476px; height: 68px; display: flex; align-items: center; padding: 0 0 12px; font-size: 24px; letter-spacing: -.3px; white-space: nowrap; font-weight: 500; }
.tab.first { letter-spacing: -.15px; }
.tab::after { content: ""; position: absolute; right: 20px; top: 13px; width: 3px; height: 32px; background: #4a4a4a; border-radius: 2px; }
.tab.last::after, .tab.active::after { content: none; }
.tab span { width: 346px; margin-left: 16px; line-height: 40px; }
.fav { width: 32px; height: 32px; }
.x { width: 16px; height: 16px; margin-left: 14px; }
.fade { -webkit-mask-image: linear-gradient(90deg, #000 275px, transparent 335px); mask-image: linear-gradient(90deg, #000 275px, transparent 335px); }
.tab.active { width: 464px; margin-left: -16px; padding-left: 16px; background: #404040; border-radius: 20px 20px 0 0; }
.tab.active::before { content: ""; position: absolute; left: -20px; right: -20px; bottom: 0; height: 20px; background: radial-gradient(circle at 0 0, transparent 20px, #404040 20.500px) left / 20px 20px no-repeat, radial-gradient(circle at 100% 0, transparent 20px, #404040 20.500px) right / 20px 20px no-repeat; }
.newtab { width: 22px; height: 22px; margin: 17px 0 0 29px; }
.tabsearch { width: 56px; height: 56px; border-radius: 20px; background: #404040; margin-left: auto; display: flex; align-items: center; justify-content: center; }

.toolbar { height: 92px; flex: none; background: #404040; border-radius: 20px 20px 0 0; display: flex; align-items: center; padding: 0 12px 0 28px; }
.nav { width: 32px; height: 32px; margin-right: 40px; }
.omnibox { width: 2394px; height: 68px; margin-left: -4px; border-radius: 34px; background: #2e2e30; display: flex; align-items: center; padding: 0 32px 0 10px; }
.site { width: 48px; height: 48px; border-radius: 50%; background: #404040; display: flex; align-items: center; justify-content: center; }
.url { margin-left: 16px; font-size: 28px; letter-spacing: -.1px; line-height: 40px; }
.star { width: 34px; height: 34px; margin-left: auto; margin-right: -2px; }
.ext { width: 40px; height: 40px; margin: 12px 0 0 32px; }
.ext svg { margin: -2px 0 0 10px; }
.ext span { display: block; height: 28px; margin-top: 2px; border-radius: 7px; background: #91b0f2; color: #202124; text-align: center; font: 600 19px/27px Inter, sans-serif; letter-spacing: -.5px; }
.pip { width: 32px; height: 28px; margin-left: 36px; }
.puzzle { width: 34px; height: 34px; margin: -3px 0 0 41px; }
.bar { width: 4px; height: 32px; border-radius: 2px; background: #000; margin-left: 33px; }
.side { width: 30px; height: 30px; margin-left: 38px; }
.avatar { width: 40px; height: 40px; border-radius: 50%; background: #6f259b; margin-left: 37px; text-align: center; font: 400 22px/40px Roboto, sans-serif; }
.update { width: 353px; height: 68px; border-radius: 34px; background: #000; margin-left: 25px; display: flex; align-items: center; padding: 0 28px 0 23px; justify-content: space-between; font-size: 26px; font-weight: 500; letter-spacing: -.4px; white-space: nowrap; }

.bookmarks { height: 70px; flex: none; background: #404040; border-bottom: 2px solid #6b6b6b; display: grid; grid-template-columns: 140px 160px 144px 242px 184px 159px 157px 217px 298px 178px 196px 1046px auto; padding: 0 0 14px 25px; font-size: 24px; font-weight: 500; letter-spacing: -.3px; white-space: nowrap; }
.bm { display: flex; align-items: center; }
.bm i { flex: 0 0 44px; }
.bm.gm i { flex-basis: 42px; }
.bm.folder i { flex-basis: 49px; }
.bm.wide i { flex-basis: 51px; }
.bm.all i { flex-basis: 48px; }
.bm b { width: 4px; height: 32px; border-radius: 2px; background: #000; margin-right: 31px; }

/* Site content */
.page { flex: 1; background: #dcd9d1; box-shadow: inset 0 0 0 #fff; }
.page::after { content: ""; position: absolute; inset: 243px 0 0; border: solid rgba(255,255,255,.2); border-width: 0 2px 2px; border-radius: 0 0 22px 22px; }
.top { height: 286px; display: flex; justify-content: flex-end; overflow: hidden; }
.corner { width: 128px; height: 128px; filter: drop-shadow(-4px 4px 14px rgba(0,0,0,.1)); }
.about { height: 1333px; background: #cb9880; padding: 233px 545px 0; }
h1 { margin: 0; padding-left: 6px; font-size: 117px; line-height: 140px; font-weight: 700; transform: scaleX(1.1); transform-origin: left; white-space: nowrap; letter-spacing: 2px; word-spacing: -10px; }
.more { letter-spacing: 4.500px; }
.abt { letter-spacing: -.4px; }
.me { letter-spacing: 6px; }
.accordion { margin-top: 181px; border: solid #fff; border-width: 2px 0; font: 47.650px/72px "Liberation Mono", monospace; }
.row { height: 131px; display: flex; justify-content: space-between; align-items: center; }
.row span { padding-top: 8px; }
.row.second { height: 133px; border-top: 2px solid #fff; }
.accordion p { margin: 0; width: 1580px; padding: 35px 0 89px; }

/* Dock */
.dock { position: absolute; left: 94px; top: 2070px; width: 3233px; height: 134px; border-radius: 38px; padding: 18px 0 0 18px; display: flex; gap: 27.400px; background: linear-gradient(#624031, #784b38 60%, #84533e); border: 2px solid #8a6252; box-shadow: 0 0 0 1px rgba(60,35,25,.8), 0 0 90px rgba(0,0,0,.28); }
.app { position: relative; width: 84px; height: 84px; flex: none; filter: drop-shadow(0 2px 2px rgba(0,0,0,.25)); }
.app > svg { width: 84px; height: 84px; }
.app.on::after { content: ""; position: absolute; left: 38px; top: 102px; width: 8px; height: 8px; border-radius: 50%; background: #ffcdb9; }
.app em { position: absolute; left: 58px; top: -10px; width: 39px; height: 39px; border-radius: 50%; background: #e2503f; text-align: center; font: 400 24px/39px Inter, sans-serif; }
.petals ellipse { mix-blend-mode: multiply; opacity: .92; }
.rule { width: 2px; height: 98px; margin: -2px 10.500px 0; background: #b78b77; flex: none; }
.tv { position: absolute; inset: 0; display: flex; align-items: center; justify-content: center; gap: 1px; font-size: 36px; font-weight: 500; letter-spacing: -1px; }
.tv svg { width: 28px; height: 30px; margin-top: -4px; }
.cal-month { font: 600 18px Inter, sans-serif; fill: #fff; text-anchor: middle; }
.cal-day { font: 300 52px Inter, sans-serif; fill: #222; text-anchor: middle; letter-spacing: -2px; }
```
